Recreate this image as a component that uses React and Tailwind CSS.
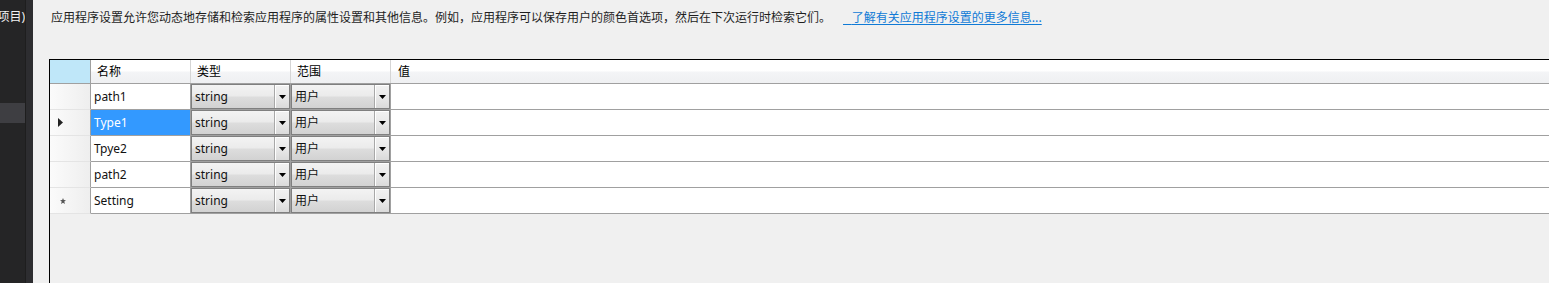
import React from 'react';

const rows = [
    { name: 'path1' },
    { name: 'Type1', selected: true, current: true },
    { name: 'Tpye2' },
    { name: 'path2' },
    { name: 'Setting', isNew: true },
];

const DropArrow = () => (
    <svg width="7" height="4" viewBox="0 0 7 4">
        <polygon points="0,0 7,0 3.5,4" fill="#000" />
    </svg>
);

// Windows 7 style combo box cell
const Combo = ({ value }) => (
    <div className="h-full w-full flex border border-[#7f7f7f] bg-[linear-gradient(to_bottom,#f3f3f3_0%,#ebebeb_48%,#dddddd_52%,#d2d2d2_100%)]">
        <span className="flex-1 flex items-center pl-[3px] text-[#111]">{value}</span>
        <span className="w-[15px] flex items-center justify-center border-l border-[#a8a8a8] shadow-[inset_1px_1px_0_#ffffff] bg-[linear-gradient(to_bottom,#f2f2f2_0%,#e9e9e9_50%,#dadada_100%)]">
            <DropArrow />
        </span>
    </div>
);

const App = () => {
    return (
        <div className="flex w-[1549px] h-[283px] overflow-hidden bg-[#f0f0f0] text-[12px] font-['Noto_Sans','Noto_Sans_CJK_SC',sans-serif]">
            {/* solution explorer strip */}
            <div className="w-[25px] flex-shrink-0 bg-[#252526] flex flex-col">
                <div className="h-[34px] flex items-center justify-end overflow-hidden whitespace-nowrap text-[#f1f1f1]">
                    (项目)
                </div>
                <div className="h-[69px]"></div>
                <div className="h-[20px] bg-[#3e3e42]"></div>
            </div>
            <div className="w-[8px] flex-shrink-0 bg-[#2d2d30] border-l border-[#1e1e1e]"></div>

            <div className="flex-1 flex flex-col pl-[16px] min-w-0">
                <div className="h-[34px] pl-[2px] pt-[8px] leading-[18px] whitespace-nowrap text-[#1e1e1e] font-['Noto_Sans_CJK_SC',sans-serif]">
                    应用程序设置允许您动态地存储和检索应用程序的属性设置和其他信息。例如，应用程序可以保存用户的颜色首选项，然后在下次运行时检索它们。
                    <a className="ml-[12px] text-[#0f7ad6] underline underline-offset-2">{'\u2002\u00a0'}了解有关应用程序设置的更多信息...</a>
                </div>
                <div className="h-[25px]"></div>

                {/* settings grid */}
                <div className="flex-1 w-[1520px] flex flex-col border-l border-t border-black">
                    <div className="h-[24px] flex border-b border-[#a0a0a0] bg-[linear-gradient(to_bottom,#ffffff_0%,#ffffff_45%,#f3f4f6_55%,#eff0f2_100%)]">
                        <div className="w-[41px] bg-[#bfe7f9] border-r border-[#a0a0a0]"></div>
                        <div className="w-[100px] flex items-center pl-[6px] border-r border-[#d5d5d5]">名称</div>
                        <div className="w-[100px] flex items-center pl-[6px] border-r border-[#d5d5d5]">类型</div>
                        <div className="w-[100px] flex items-center pl-[6px] border-r border-[#d5d5d5]">范围</div>
                        <div className="flex-1 flex items-center pl-[7px]">值</div>
                    </div>

                    {rows.map((row) => (
                        <div key={row.name} className="h-[26px] flex">
                            <div className="w-[41px] flex items-center pl-[8px] border-r border-[#a0a0a0] border-b border-b-[#e4e4e4] bg-[linear-gradient(to_right,#fbfbfb,#eeeeee)]">
                                {row.current && (
                                    <svg width="5" height="9" viewBox="0 0 5 9">
                                        <polygon points="0,0 5,4.5 0,9" fill="#222" />
                                    </svg>
                                )}
                                {row.isNew && (
                                    <svg width="6" height="6" viewBox="0 0 6 6" className="ml-[2px]">
                                        <polygon points="3,0 3.8,2.1 6,2.2 4.3,3.6 4.9,6 3,4.7 1.1,6 1.7,3.6 0,2.2 2.2,2.1" fill="#555" />
                                    </svg>
                                )}
                            </div>
                            <div
                                className={
                                    row.selected
                                        ? 'w-[100px] flex items-center pl-[3px] border-r border-b border-[#a0a0a0] bg-[#3399ff] text-white'
                                        : 'w-[100px] flex items-center pl-[3px] border-r border-b border-[#a0a0a0] bg-white text-[#111]'
                                }
                            >
                                {row.name}
                            </div>
                            <div className="w-[100px] border-r border-b border-[#a0a0a0] bg-white">
                                <Combo value="string" />
                            </div>
                            <div className="w-[100px] border-r border-b border-[#a0a0a0] bg-white">
                                <Combo value="用户" />
                            </div>
                            <div className="flex-1 border-b border-[#a0a0a0] bg-white"></div>
                        </div>
                    ))}
                </div>
            </div>
        </div>
    );
};

export default App;
